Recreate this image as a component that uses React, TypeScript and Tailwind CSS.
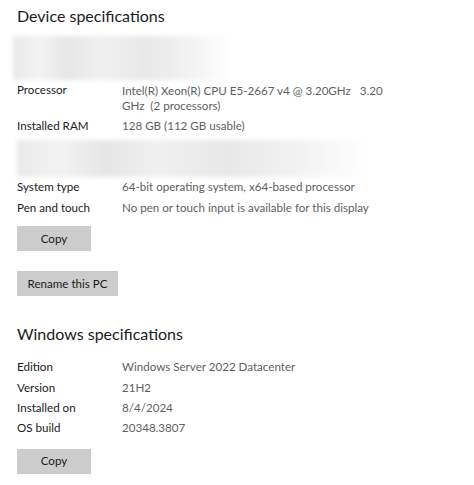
import React from 'react';

const font = { fontFamily: 'Lato, Roboto, sans-serif' };

function Row({ label, value }: { label: string; value: React.ReactNode }) {
  return (
    <div className="flex text-[11.6px] leading-[20.3px]">
      <div className="w-[105px] shrink-0 text-[#1b1b1b]">{label}</div>
      <div className="w-[262px] text-[#5f5f5f]">{value}</div>
    </div>
  );
}

function Blur({ w, h }: { w: number; h: number }) {
  return (
    <div
      className="bg-[linear-gradient(90deg,#e9e9e9_0%,#f3f3f3_12%,#e6e6e6_25%,#f0f0f0_40%,#e8e8e8_60%,#f2f2f2_80%,#ffffff_100%)] blur-[2px]"
      style={{ width: w, height: h }}
    />
  );
}

function Button({ children, w }: { children: React.ReactNode; w: string }) {
  return (
    <button className={`${w} h-[25px] bg-[#cccccc] text-[11.6px] text-[#1b1b1b]`}>{children}</button>
  );
}

export default function App() {
  return (
    <div className="w-[474px] h-[485px] bg-white pl-[17px] overflow-hidden" style={font}>
      <h2 className="pt-[4px] text-[16px] leading-[24px] text-[#1b1b1b]">Device specifications</h2>
      <div className="mt-[8px] -ml-[4px]">
        <Blur w={220} h={44} />
      </div>
      <div className="flex text-[11.6px]">
        <div className="w-[105px] shrink-0 text-[#1b1b1b] leading-[20px]">Processor</div>
        <div className="w-[262px] text-[#5f5f5f] leading-[15px] py-[3px] whitespace-nowrap">
          Intel(R) Xeon(R) CPU E5-2667 v4 @ 3.20GHz&nbsp;&nbsp; 3.20
          <br />
          GHz&nbsp; (2 processors)
        </div>
      </div>
      <Row label="Installed RAM" value="128 GB (112 GB usable)" />
      <div className="mt-[4px]">
        <Blur w={350} h={37} />
      </div>
      <Row label="System type" value="64-bit operating system, x64-based processor" />
      <Row label="Pen and touch" value="No pen or touch input is available for this display" />
      <div className="mt-[7px]">
        <Button w="w-[74px]">Copy</Button>
      </div>
      <div className="mt-[19px]">
        <Button w="w-[101px]">Rename this PC</Button>
      </div>
      <h2 className="mt-[26px] text-[16px] leading-[24px] text-[#1b1b1b]">Windows specifications</h2>
      <div className="mt-[11px]">
        <Row label="Edition" value="Windows Server 2022 Datacenter" />
        <Row label="Version" value="21H2" />
        <Row label="Installed on" value="8/4/2024" />
        <Row label="OS build" value="20348.3807" />
      </div>
      <div className="mt-[9px]">
        <Button w="w-[74px]">Copy</Button>
      </div>
    </div>
  );
}
